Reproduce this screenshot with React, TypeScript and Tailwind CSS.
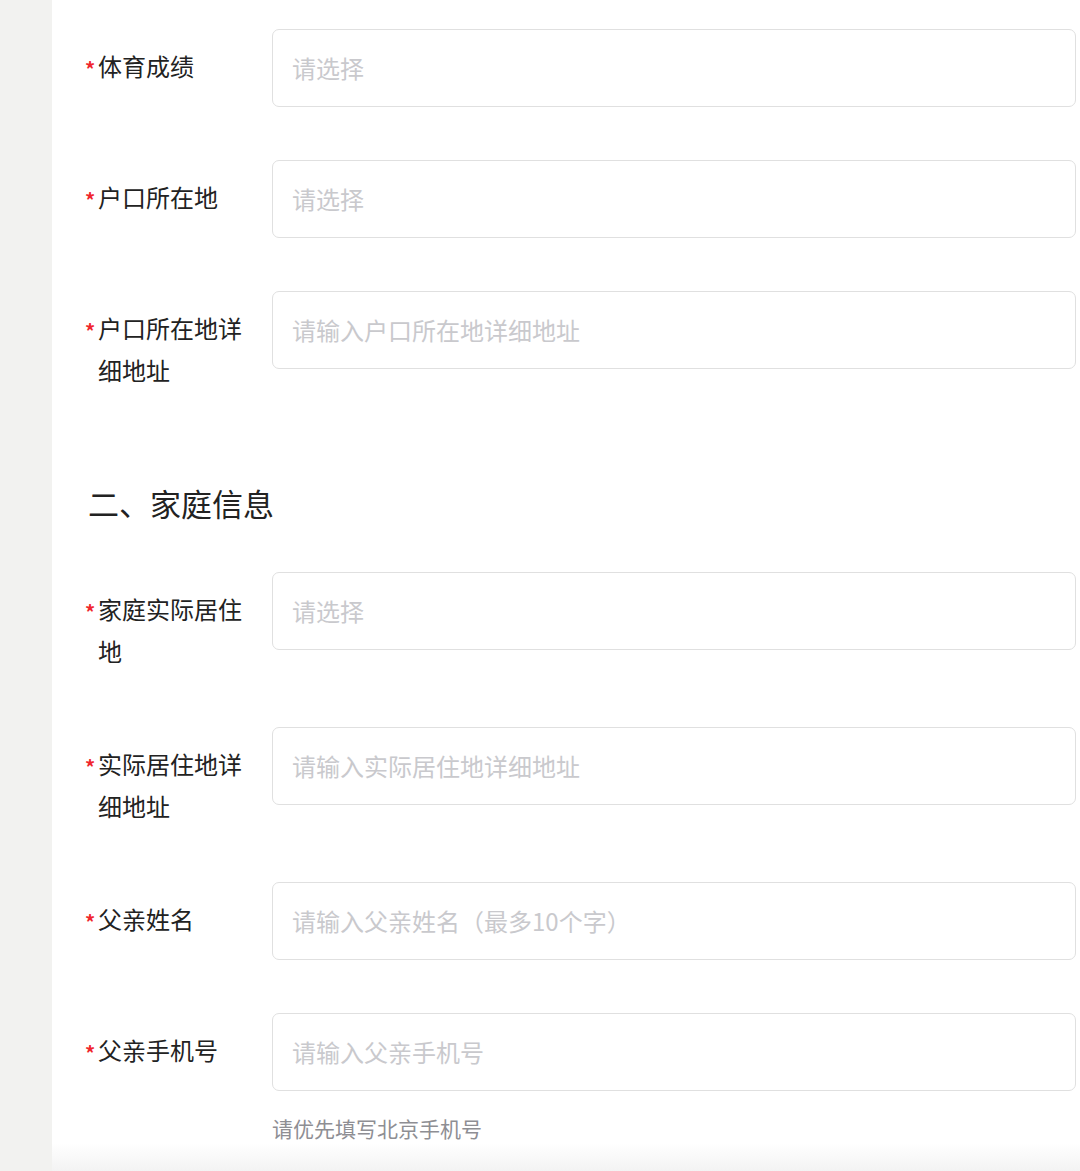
import React from "react";

const font = { fontFamily: '"Noto Sans CJK SC", "Noto Sans", sans-serif' };

function Row({
  label,
  placeholder,
  last,
}: {
  label: string;
  placeholder: string;
  last?: boolean;
}) {
  return (
    <div className={`flex ${last ? "" : "mb-[53px]"}`}>
      <div className="w-[187px] shrink-0 flex pt-[16px] pb-[2px]">
        <span className="w-[13px] shrink-0 text-[20px] font-bold leading-[42px] text-[#f0262d] translate-y-[3px]">*</span>
        <span className="w-[150px] text-[24px] leading-[42px] text-[#222]">{label}</span>
      </div>
      <div className="flex-1 h-[78px] border-[1.5px] border-[#e0e0e0] rounded-[7px] px-[19px] flex items-center text-[24px] text-[#c9c9cd]">
        {placeholder}
      </div>
    </div>
  );
}

export default function App() {
  return (
    <div className="flex min-h-[1171px] bg-white overflow-hidden relative" style={font}>
      <div className="w-[52px] shrink-0 bg-[#f2f2f0]" />
      <div className="flex-1 flex flex-col pl-[33px] pr-[4px] pt-[29px]">
        <Row label="体育成绩" placeholder="请选择" />
        <Row label="户口所在地" placeholder="请选择" />
        <Row label="户口所在地详细地址" placeholder="请输入户口所在地详细地址" last />
        <div className="mt-[88px] mb-[47px] h-[44px] pl-[3px] text-[31px] leading-[44px] text-[#222]">二、家庭信息</div>
        <Row label="家庭实际居住地" placeholder="请选择" />
        <Row label="实际居住地详细地址" placeholder="请输入实际居住地详细地址" />
        <Row label="父亲姓名" placeholder="请输入父亲姓名（最多10个字）" />
        <Row label="父亲手机号" placeholder="请输入父亲手机号" last />
        <div className="ml-[187px] mt-[22px] text-[21px] leading-[30px] text-[#8e8e93]">请优先填写北京手机号</div>
      </div>
      <div className="absolute left-[52px] right-0 bottom-0 h-[28px] bg-gradient-to-b from-transparent to-[#f3f3f3] pointer-events-none" />
    </div>
  );
}
